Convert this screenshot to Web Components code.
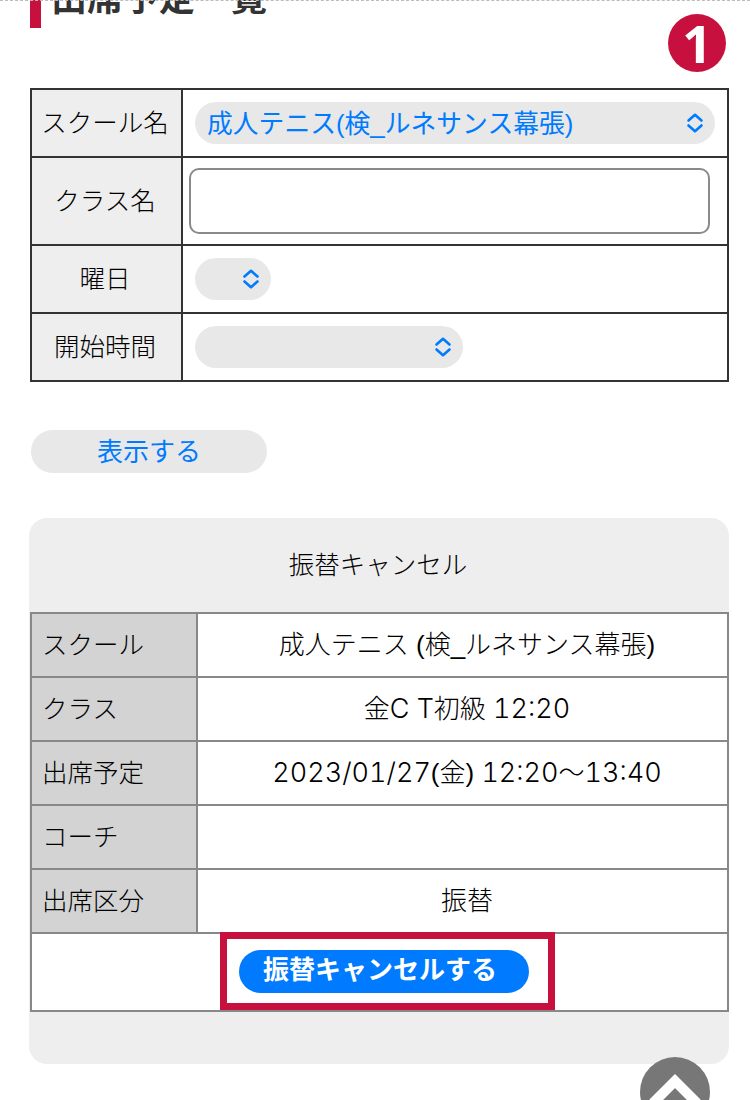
<!DOCTYPE html>
<html lang="ja"><head><meta charset="utf-8">
<style>
html,body{margin:0;padding:0;background:#fff}
body{font-family:"Liberation Sans","Noto Sans CJK JP",sans-serif;color:#000;width:750px;height:1100px;overflow:hidden;position:relative}
.n{font-family:Inter,"Liberation Sans",sans-serif;font-size:27px;font-weight:300;font-variant-numeric:tabular-nums}
</style></head><body>
<att-page>
  <att-heading>出席予定一覧</att-heading>
  <att-search>
    <att-row label="スクール名"><att-select w="520" text="成人テニス(検_ルネサンス幕張)"></att-select></att-row>
    <att-row label="クラス名" h="86"><att-input></att-input></att-row>
    <att-row label="曜日"><att-select w="76"></att-select></att-row>
    <att-row label="開始時間" last><att-select w="268"></att-select></att-row>
  </att-search>
  <att-pill-button>表示する</att-pill-button>
  <att-panel title="振替キャンセル">
    <att-info label="スクール">成人テニス (検_ルネサンス幕張)</att-info>
    <att-info label="クラス">金<span class="n">C T</span>初級 <span class="n">12:20</span></att-info>
    <att-info label="出席予定"><span class="n">2023/01/27</span>(金) <span class="n">12:20</span>～<span class="n">13:40</span></att-info>
    <att-info label="コーチ"></att-info>
    <att-info label="出席区分">振替</att-info>
    <att-action>振替キャンセルする</att-action>
  </att-panel>
</att-page>
<att-badge>1</att-badge>
<att-top></att-top>
<script>
function def(name, html){
  customElements.define(name, class extends HTMLElement{
    connectedCallback(){
      if(this.shadowRoot) return;
      const r=this.attachShadow({mode:'open'});
      r.innerHTML=typeof html==='function'?html(this):html;
    }
  });
}
const CHEV='<svg width="18" height="20" viewBox="0 0 18 20" fill="none" stroke="#007bff" stroke-width="2.6" stroke-linecap="round" stroke-linejoin="round"><path d="M2.5 7.5 9 1.8l6.500 5.700M2.500 12.500 9 18.200l6.500-5.700"/></svg>';
def('att-page',`<style>:host{display:block;box-sizing:border-box;height:1100px;overflow:hidden;position:relative}
.rule{height:0;border-top:1px dashed #bbb;position:relative;z-index:1}</style><div class="rule"></div><slot></slot>`);
def('att-heading',`<style>:host{display:flow-root;margin:-13px 0 0 30px;height:40px;border-left:11px solid #c8103f;box-sizing:border-box;padding-left:10px;font-weight:700;font-size:36px;line-height:30px;color:#333;white-space:nowrap}
span{display:block;margin-top:-4px}</style><span><slot></slot></span>`);
def('att-search',`<style>:host{display:block;margin:60px 21px 0 30px;border:2px solid #333;box-sizing:border-box;width:699px}</style><slot></slot>`);
def('att-row',h=>`<style>:host{display:grid;grid-template-columns:151px 1fr;height:${h.getAttribute('h')||66}px;${h.hasAttribute('last')?'':'border-bottom:2px solid #333;'}}
.l{background:#eee;border-right:2px solid #333;display:flex;align-items:center;justify-content:center;font-size:25.5px;color:#000;font-weight:300;padding:0 3px 5px 0}
.c{display:flex;align-items:center;padding:0 12px 0 ${h.getAttribute('h')?'6':'12'}px}</style><div class="l">${h.getAttribute('label')}</div><div class="c"><slot></slot></div>`);
def('att-select',h=>`<style>:host{display:flex;align-items:center;justify-content:space-between;box-sizing:border-box;width:${h.getAttribute('w')}px;height:42px;border-radius:21px;background:#e8e8e8;padding:0 11px 0 12px;color:#007bff;font-size:25.8px;font-weight:400}
span{padding-bottom:4px}</style><span>${h.getAttribute('text')||''}</span>${CHEV}`);
def('att-input',`<style>:host{display:block;box-sizing:border-box;width:521px;height:66px;border:2px solid #8a8a8a;border-radius:10px;background:#fff}</style>`);
def('att-pill-button',`<style>:host{display:flex;align-items:center;justify-content:center;box-sizing:border-box;margin:48px 0 0 31px;width:236px;height:43px;padding-bottom:4px;border-radius:22px;background:#e8e8e8;color:#007bff;font-size:26px;font-weight:400}</style><slot></slot>`);
def('att-panel',h=>`<style>:host{display:block;box-sizing:border-box;margin:45px 21px 0 29px;width:700px;height:546px;background:#eee;border-radius:18px}
.t{height:94px;display:flex;align-items:center;justify-content:center;font-size:25.5px;color:#000;font-weight:300;padding:0 2px 5px 0;box-sizing:border-box}
.b{margin-left:1px;width:699px;border:2px solid #888;box-sizing:border-box;background:#fff}</style><div class="t">${h.getAttribute('title')}</div><div class="b"><slot></slot></div>`);
def('att-info',h=>`<style>:host{display:grid;grid-template-columns:166px 1fr;height:62px;border-bottom:2px solid #888;font-size:26px;color:#000;font-weight:300}
.l{background:#d3d3d3;border-right:2px solid #888;display:flex;align-items:center;padding:0 0 5px 10px;font-size:25.5px}
.c{display:flex;align-items:baseline;justify-content:center;background:#fff;white-space:pre-wrap;padding:10px 0 0 9px;box-sizing:border-box}</style><div class="l">${h.getAttribute('label')}</div><div class="c"><span><slot></slot></span></div>`);
def('att-action',`<style>:host{display:block;height:76px;position:relative;background:#fff}
.box{position:absolute;left:188px;top:-2px;width:335px;height:78px;box-sizing:border-box;border:7px solid #c8103f;background:#fff;display:flex;align-items:flex-start}
.btn{margin:11px 0 0 12px;width:290px;height:43px;border-radius:22px;background:#007bff;color:#fff;font-weight:700;font-size:26px;line-height:40px;padding-left:24px;box-sizing:border-box;white-space:nowrap}</style><div class="box"><div class="btn"><slot></slot></div></div>`);
def('att-badge',`<style>:host{position:absolute;left:668px;top:14px;width:58px;height:58px;border-radius:50%;background:#c8103f;color:#fff;font-family:"Open Sans",sans-serif;font-weight:700;font-size:52px;line-height:58px;text-align:center}</style><slot></slot>`);
def('att-top',`<style>:host{position:absolute;left:640px;top:1057px;width:70px;height:70px;border-radius:50%;background:#777;display:block}svg{display:block}</style><svg width="70" height="70" viewBox="0 0 70 70" fill="none"><path d="M13 46 35 24l22 22" stroke="#fff" stroke-width="10"/></svg>`);
</script>
</body></html>
